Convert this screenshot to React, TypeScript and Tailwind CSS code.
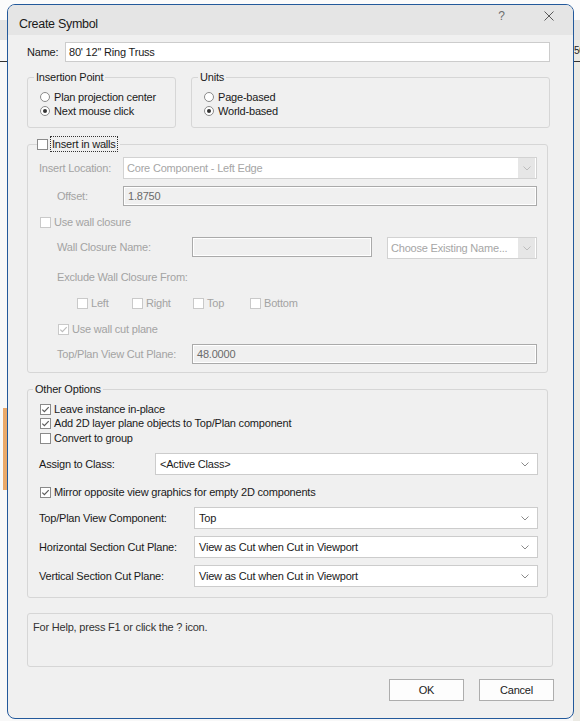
import React from "react";

function Check({ checked = false, disabled = false }: { checked?: boolean; disabled?: boolean }) {
  return (
    <span
      className={`flex h-[11px] w-[11px] shrink-0 items-center justify-center border bg-white ${
        disabled ? "border-[#c9c9c9]" : "border-[#8a8a8a]"
      }`}
    >
      {checked && (
        <svg width="9" height="9" viewBox="0 0 9 9">
          <path d="M1.3 4.6 L3.4 6.7 L7.7 2.1" fill="none" stroke={disabled ? "#bdbdbd" : "#5c5c5c"} strokeWidth="1.2" />
        </svg>
      )}
    </span>
  );
}

function Radio({ on = false }: { on?: boolean }) {
  return (
    <span className="flex h-[10px] w-[10px] shrink-0 items-center justify-center rounded-full border border-[#8a8a8a] bg-white">
      {on && <span className="h-[4px] w-[4px] rounded-full bg-[#333333]" />}
    </span>
  );
}

function Chevron({ color }: { color: string }) {
  return (
    <svg width="8" height="5" viewBox="0 0 8 5">
      <path d="M0.5 0.5 L4 4 L7.5 0.5" fill="none" stroke={color} strokeWidth="1" />
    </svg>
  );
}

function Combo({ text, w }: { text: string; w: string }) {
  return (
    <div className={`flex h-[22px] ${w} items-center justify-between border border-[#cccccc] bg-white pl-[4px] pr-[8px]`}>
      <span>{text}</span>
      <Chevron color="#8a8a8a" />
    </div>
  );
}

function DisabledCombo({ text, w }: { text: string; w: string }) {
  return (
    <div className={`flex h-[22px] ${w} items-center justify-between border border-[#d2d2d2] bg-white pl-[3px] pr-[1px] text-[#a6a6a6]`}>
      <span>{text}</span>
      <span className="flex h-[20px] w-[17px] items-center justify-center bg-[#e6e6e6]">
        <Chevron color="#bdbdbd" />
      </span>
    </div>
  );
}

function DisabledBox({ text, w }: { text?: string; w: string }) {
  return (
    <div
      className={`flex h-[20px] ${w} items-center border border-[#aaaaaa] bg-[#f0f0f0] pl-[4px] text-[#6a6a6a] shadow-[inset_1px_1px_0_#ffffff,inset_-1px_-1px_0_#ffffff]`}
    >
      {text}
    </div>
  );
}

export default function App() {
  return (
    <div className="relative h-[721px] w-[580px] overflow-hidden bg-[linear-gradient(to_bottom,#fbfbfb_0px,#fbfbfb_20px,#e4e4e4_20px,#e4e4e4_40px,transparent_40px),linear-gradient(to_right,#f8f8f8_573px,#ebeae4_573px)] pl-[7px] pt-[4px] font-['Liberation_Sans',Arial,sans-serif] text-[11px] leading-[13px] tracking-[-0.2px] text-[#1a1a1a]">
      {/* desktop details behind the window */}
      <div className="absolute left-[3px] top-[408px] h-[82px] w-[4px] bg-[#eaa96a]" />
      <div className="absolute left-0 top-[61px] h-[1px] w-[7px] bg-[#333333]" />
      <div className="absolute left-[574px] top-[61px] h-[1px] w-[6px] bg-[#333333]" />
      <span className="absolute left-[574px] top-[45px] text-[10px] leading-[12px] text-[#222222]">50</span>

      <div className="relative flex h-[715px] w-[567px] flex-col overflow-hidden rounded-[8px] border border-[#23599b] bg-[#f0f0f0]">
        {/* Title bar */}
        <div className="flex h-[30px] shrink-0 items-start bg-[#e5e5e5] pl-[11px] pr-[19px]">
          <span className="mt-[12px] text-[12.5px] leading-[14px] tracking-[-0.3px] text-[#1a1a1a]">Create Symbol</span>
          <span className="ml-auto mt-[4px] text-[12px] leading-[14px] tracking-normal text-[#6e6e6e]">?</span>
          <svg className="ml-[39px] mt-[6px]" width="10" height="10" viewBox="0 0 10 10">
            <path d="M0.5 0.5 L9.5 9.5 M9.5 0.5 L0.5 9.5" stroke="#5a5a5a" strokeWidth="1" fill="none" />
          </svg>
        </div>

        <div className="flex flex-col pl-[19px]">
          {/* Name */}
          <div className="mt-[7px] flex h-[20px] items-center">
            <span className="w-[38px]">Name:</span>
            <div className="flex h-[20px] w-[485px] items-center border border-[#cccccc] bg-white pl-[3px]">80' 12'' Ring Truss</div>
          </div>

          {/* Insertion Point / Units */}
          <div className="mt-[15px] flex gap-[15px]">
            <div className="relative h-[51px] w-[149px] rounded-[3px] border border-[#d6d6d6]">
              <span className="absolute left-[6px] top-[-7px] bg-[#f0f0f0] px-[2px]">Insertion Point</span>
              <div className="flex flex-col pl-[12px] pt-[12px]">
                <div className="flex h-[14px] items-center gap-[4px]">
                  <Radio />
                  <span>Plan projection center</span>
                </div>
                <div className="flex h-[14px] items-center gap-[4px]">
                  <Radio on />
                  <span>Next mouse click</span>
                </div>
              </div>
            </div>
            <div className="relative h-[51px] w-[359px] rounded-[3px] border border-[#d6d6d6]">
              <span className="absolute left-[6px] top-[-7px] bg-[#f0f0f0] px-[2px]">Units</span>
              <div className="flex flex-col pl-[12px] pt-[12px]">
                <div className="flex h-[14px] items-center gap-[4px]">
                  <Radio />
                  <span>Page-based</span>
                </div>
                <div className="flex h-[14px] items-center gap-[4px]">
                  <Radio on />
                  <span>World-based</span>
                </div>
              </div>
            </div>
          </div>

          {/* Insert in walls */}
          <div className="relative mt-[16px] h-[229px] w-[521px] rounded-[3px] border border-[#d6d6d6] text-[#a3a3a3]">
            <div className="absolute left-[9px] top-[-9px] flex h-[16px] items-center bg-[#f0f0f0] pr-[2px]">
              <Check />
              <span className="ml-[2px] flex h-[16px] items-center border border-dotted border-[#333333] px-[1px] text-[#1a1a1a]">
                Insert in walls
              </span>
            </div>
            <div className="flex flex-col">
              <div className="mt-[12px] flex h-[22px] items-center pl-[11px]">
                <span className="w-[84px]">Insert Location:</span>
                <DisabledCombo text="Core Component - Left Edge" w="w-[414px]" />
              </div>
              <div className="mt-[7px] flex h-[20px] items-center pl-[29px]">
                <span className="w-[66px]">Offset:</span>
                <DisabledBox text="1.8750" w="w-[414px]" />
              </div>
              <div className="mt-[9px] flex h-[14px] items-center gap-[3px] pl-[12px]">
                <Check disabled />
                <span>Use wall closure</span>
              </div>
              <div className="mt-[8px] flex h-[22px] items-start pl-[29px]">
                <span className="flex h-[20px] w-[135px] items-center">Wall Closure Name:</span>
                <DisabledBox w="w-[180px]" />
                <div className="ml-[15px]">
                  <DisabledCombo text="Choose Existing Name..." w="w-[150px]" />
                </div>
              </div>
              <div className="mt-[11px] flex h-[14px] items-center pl-[29px]">
                <span>Exclude Wall Closure From:</span>
              </div>
              <div className="mt-[12px] flex h-[14px] items-center pl-[49px]">
                <div className="flex w-[55px] items-center gap-[3px]">
                  <Check disabled />
                  <span>Left</span>
                </div>
                <div className="flex w-[61px] items-center gap-[3px]">
                  <Check disabled />
                  <span>Right</span>
                </div>
                <div className="flex w-[57px] items-center gap-[3px]">
                  <Check disabled />
                  <span>Top</span>
                </div>
                <div className="flex items-center gap-[3px]">
                  <Check disabled />
                  <span>Bottom</span>
                </div>
              </div>
              <div className="mt-[12px] flex h-[14px] items-center gap-[3px] pl-[30px]">
                <Check checked disabled />
                <span>Use wall cut plane</span>
              </div>
              <div className="mt-[8px] flex h-[20px] items-center pl-[29px]">
                <span className="w-[135px]">Top/Plan View Cut Plane:</span>
                <DisabledBox text="48.0000" w="w-[345px]" />
              </div>
            </div>
          </div>

          {/* Other Options */}
          <div className="relative mt-[16px] h-[209px] w-[521px] rounded-[3px] border border-[#d6d6d6]">
            <span className="absolute left-[5px] top-[-7px] bg-[#f0f0f0] px-[2px]">Other Options</span>
            <div className="flex flex-col">
              <div className="mt-[12px] flex h-[14px] items-center gap-[3px] pl-[12px]">
                <Check checked />
                <span>Leave instance in-place</span>
              </div>
              <div className="flex h-[14px] items-center gap-[3px] pl-[12px]">
                <Check checked />
                <span>Add 2D layer plane objects to Top/Plan component</span>
              </div>
              <div className="mt-[1px] flex h-[14px] items-center gap-[3px] pl-[12px]">
                <Check />
                <span>Convert to group</span>
              </div>
              <div className="mt-[8px] flex h-[22px] items-center pl-[11px]">
                <span className="w-[116px]">Assign to Class:</span>
                <Combo text="<Active Class>" w="w-[383px]" />
              </div>
              <div className="mt-[10px] flex h-[14px] items-center gap-[3px] pl-[12px]">
                <Check checked />
                <span>Mirror opposite view graphics for empty 2D components</span>
              </div>
              <div className="mt-[8px] flex h-[22px] items-center pl-[11px]">
                <span className="w-[155px]">Top/Plan View Component:</span>
                <Combo text="Top" w="w-[344px]" />
              </div>
              <div className="mt-[7px] flex h-[22px] items-center pl-[11px]">
                <span className="w-[155px]">Horizontal Section Cut Plane:</span>
                <Combo text="View as Cut when Cut in Viewport" w="w-[344px]" />
              </div>
              <div className="mt-[7px] flex h-[22px] items-center pl-[11px]">
                <span className="w-[155px]">Vertical Section Cut Plane:</span>
                <Combo text="View as Cut when Cut in Viewport" w="w-[344px]" />
              </div>
            </div>
          </div>

          {/* Help */}
          <div className="mt-[15px] h-[54px] w-[526px] rounded-[3px] border border-[#d6d6d6] pl-[5px] pt-[7px] text-[#333333]">
            For Help, press F1 or click the ? icon.
          </div>

          {/* Buttons */}
          <div className="mt-[12px] flex w-[527px] justify-end gap-[15px]">
            <button className="flex h-[22px] w-[75px] items-center justify-center border border-[#adadad] bg-[#fdfdfd] text-[#1a1a1a]">
              OK
            </button>
            <button className="flex h-[22px] w-[75px] items-center justify-center border border-[#adadad] bg-[#fdfdfd] text-[#1a1a1a]">
              Cancel
            </button>
          </div>
        </div>
      </div>
    </div>
  );
}
